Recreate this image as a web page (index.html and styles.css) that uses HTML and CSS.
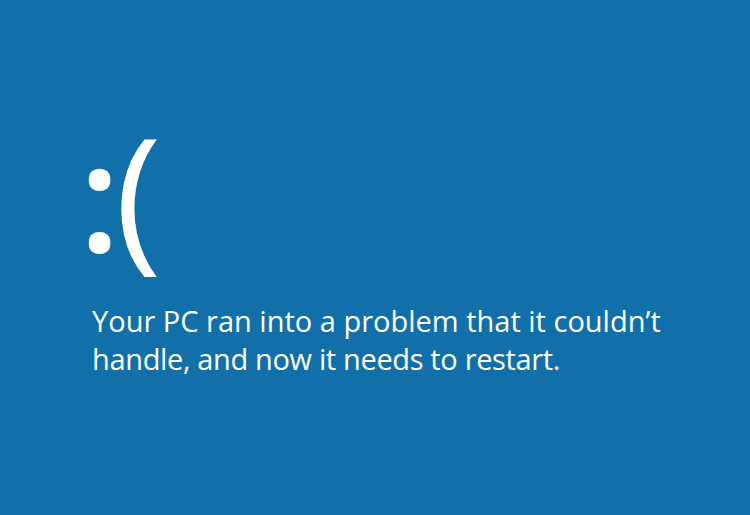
FILE: index.html
```html
<!DOCTYPE html>
<html>
<head>
<meta charset="utf-8">
<link rel="stylesheet" href="styles.css">
</head>
<body>
<main class="screen">
  <div class="face"><span class="eyes">:</span><span class="mouth">(</span></div>
  <p class="message">Your PC ran into a problem that it couldn’t<br><span class="line-two">handle, and now it needs to restart.</span></p>
</main>
</body>
</html>
```
FILE: styles.css
```css
html, body {
  margin: 0;
  padding: 0;
  background: #1170aa;
}
.screen {
  width: 750px;
  height: 515px;
  box-sizing: border-box;
  padding: 91px 0 0 92px;
  color: #ffffff;
  font-family: "Open Sans", "Noto Sans", sans-serif;
}
.face {
  font-size: 158px;
  line-height: 200px;
  height: 200px;
  white-space: nowrap;
}
.eyes {
  font-size: 150px;
  font-weight: 600;
  margin-left: -13px;
  letter-spacing: -5px;
}
.mouth {
  font-weight: 400;
}
.message {
  margin: 11px 0 0 0;
  font-size: 29px;
  line-height: 38px;
  font-weight: 400;
}
.line-two {
  letter-spacing: -0.35px;
}
```
